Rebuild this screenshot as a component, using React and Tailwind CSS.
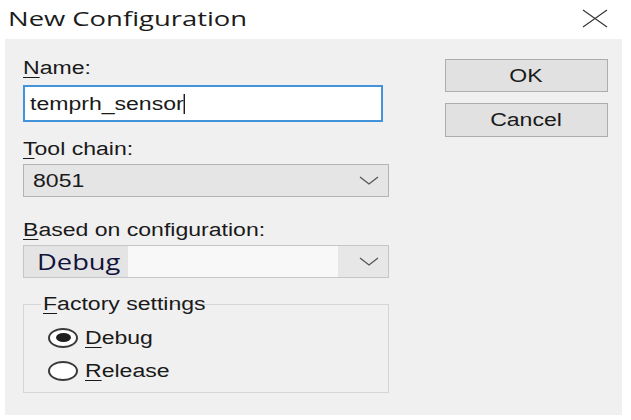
// Dialog text is drawn a little wider than the font's own metrics
const Wide = ({ children, className = '' }) => (
  <span className={`inline-block origin-left scale-x-[1.28] whitespace-nowrap ${className}`}>{children}</span>
)

const Chevron = () => (
  <svg width="20" height="9" viewBox="0 0 20 9" className="shrink-0">
    <path d="M1 1 L10 8 L19 1" stroke="#555" strokeWidth="1.3" fill="none" />
  </svg>
)

const Label = ({ first, rest, className = '' }) => (
  <div className={`text-[18px] leading-[20px] text-[#1a1a1a] ${className}`}>
    <Wide>
      <span className="underline underline-offset-[3px] decoration-1">{first}</span>
      {rest}
    </Wide>
  </div>
)

const Radio = ({ checked, first, rest }) => (
  <div className="h-[33px] flex items-center pl-[7px]">
    <div className="w-[30px] h-[20px] rounded-[50%] border-2 border-[#3a3a3a] bg-white flex items-center justify-center">
      {checked && <div className="w-[15px] h-[9px] rounded-[50%] bg-[#1e1e1e]" />}
    </div>
    <div className="ml-[7px] text-[18px] leading-[20px] text-[#1a1a1a]">
      <Wide>
        <span className="underline underline-offset-[3px] decoration-1">{first}</span>
        {rest}
      </Wide>
    </div>
  </div>
)

export default function App() {
  return (
    <div className="w-[631px] h-[420px] bg-white overflow-hidden font-['Liberation_Sans',Arial,sans-serif]">
      {/* title bar */}
      <div className="h-[39px] flex items-start justify-between">
        <div className="pl-[8px] pt-[5px] text-[20px] leading-[27px] text-[#1b1b1b] font-['Open_Sans',sans-serif]">
          <span className="inline-block origin-left scale-x-[1.37] whitespace-nowrap">New Configuration</span>
        </div>
        <svg width="26" height="19" viewBox="0 0 26 19" className="mt-[9px] mr-[23px]">
          <path d="M1 1 L25 18 M25 1 L1 18" stroke="#333" strokeWidth="1.1" fill="none" />
        </svg>
      </div>

      {/* dialog body */}
      <div className="ml-[5px] w-[617px] h-[376px] bg-[#f0f0f0] flex">
        <div className="pl-[18px] w-[384px] shrink-0">
          <Label first="N" rest="ame:" className="mt-[19px]" />
          <div className="mt-[7px] h-[37px] w-[360px] border-2 border-[#4393dc] bg-white flex items-center pl-[5px] text-[18px] leading-[20px] text-[#1a1a1a]">
            <Wide>
              temprh_senso<span className="border-r border-black">r</span>
            </Wide>
          </div>

          <Label first="T" rest="ool chain:" className="mt-[17px]" />
          <div className="mt-[5px] h-[33px] w-[366px] border border-[#b4b4b4] bg-[#e5e5e5] flex items-center pl-[9px] pr-[9px] text-[18px] leading-[20px] text-[#1a1a1a]">
            <div className="flex-1">
              <Wide>8051</Wide>
            </div>
            <Chevron />
          </div>

          <Label first="B" rest="ased on configuration:" className="mt-[23px]" />
          <div className="mt-[5px] h-[33px] w-[366px] border border-[#c6c6c6] flex">
            <div className="w-[104px] bg-[#e4e4e4] flex items-center pl-[13px] text-[21px] leading-[24px] text-[#10123a] font-['Open_Sans',sans-serif]">
              <span className="inline-block origin-left scale-x-[1.3]">Debug</span>
            </div>
            <div className="w-[210px] bg-[#f8f8f8]" />
            <div className="flex-1 bg-[#e7e7e7] flex items-center justify-end pr-[9px]">
              <Chevron />
            </div>
          </div>

          <fieldset className="mt-[16px] w-[366px] border border-[#d6d6d6] pl-[17px] pb-[5px]">
            <legend className="px-[2px] text-[18px] leading-[20px] text-[#1a1a1a]">
              <Wide>
                <span className="underline underline-offset-[3px] decoration-1">F</span>
                actory settings
              </Wide>
            </legend>
            <div className="pt-[7px]">
              <Radio checked first="D" rest="ebug" />
              <Radio first="R" rest="elease" />
            </div>
          </fieldset>
        </div>

        <div className="ml-[56px] w-[163px] flex flex-col">
          <button className="mt-[20px] h-[33px] border border-[#adadad] bg-[#e1e1e1] text-[18px] leading-[20px] text-[#1a1a1a]">
            <span className="inline-block scale-x-[1.28]">OK</span>
          </button>
          <button className="mt-[11px] h-[34px] border border-[#adadad] bg-[#e1e1e1] text-[18px] leading-[20px] text-[#1a1a1a]">
            <span className="inline-block scale-x-[1.28]">Cancel</span>
          </button>
        </div>
      </div>
    </div>
  )
}
